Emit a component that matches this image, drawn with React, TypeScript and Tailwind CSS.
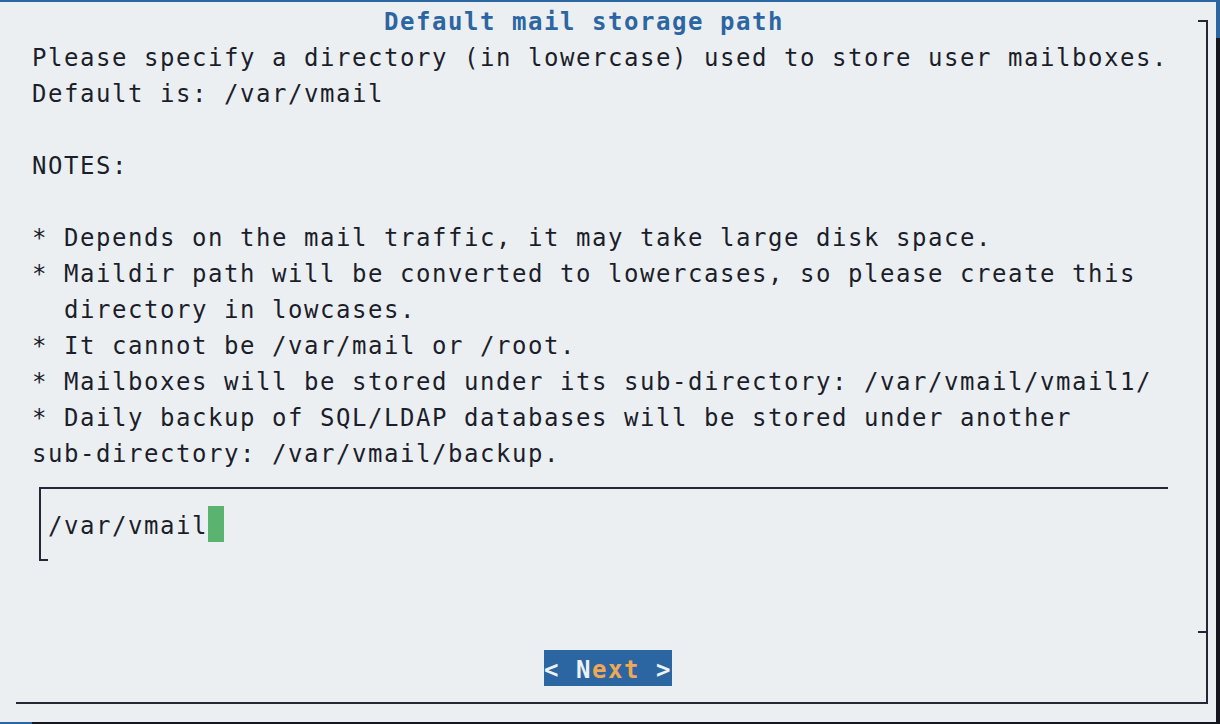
const mono = "font-['DejaVu_Sans_Mono','Liberation_Mono',monospace]";

const lines: string[] = [
  "Please specify a directory (in lowercase) used to store user mailboxes.",
  "Default is: /var/vmail",
  "",
  "NOTES:",
  "",
  "* Depends on the mail traffic, it may take large disk space.",
  "* Maildir path will be converted to lowercases, so please create this",
  "  directory in lowcases.",
  "* It cannot be /var/mail or /root.",
  "* Mailboxes will be stored under its sub-directory: /var/vmail/vmail1/",
  "* Daily backup of SQL/LDAP databases will be stored under another",
  "sub-directory: /var/vmail/backup.",
];

function Row({ children, className = "" }: { children?: React.ReactNode; className?: string }) {
  return <div className={`h-[36px] pt-[2px] whitespace-pre ${className}`}>{children}</div>;
}

function InputBox() {
  return (
    <div className="mt-[17px] ml-[23px] w-[1129px] border-t-2 border-l-2 border-[#262734] flex flex-col">
      <div className="pt-[17px] pl-[7px] flex items-start h-[53px]">
        <span className="h-[36px] pt-[2px]">/var/vmail</span>
        <span className="w-[16px] h-[36px] bg-[#5bb370]" />
      </div>
      <div className="mt-[17px] w-[7px] h-[2px] bg-[#262734]" />
    </div>
  );
}

function NextButton() {
  return (
    <div className="mt-[89px] ml-[528px] w-[128px] h-[36px] pt-[2px] bg-[#2b66a3] font-bold whitespace-pre text-[#eef2f7]">
      {"< "}N<span className="text-[#f0a953]">ext</span>{" >"}
    </div>
  );
}

function Dialog() {
  return (
    <div
      className={`w-[1216px] h-[720px] bg-[#eceff1] pt-[18px] pl-[16px] text-[#1b1e2c] text-[24px] leading-[36px] tracking-[1.55px] ${mono}`}
    >
      <div className="relative flex flex-col w-[1192px] h-[684px] border-r-2 border-b-2 border-[#262734]">
        <span className="absolute top-0 right-0 w-[8px] h-[2px] bg-[#262734]" />
        <span className="absolute top-[611px] right-0 w-[8px] h-[2px] bg-[#262734]" />
        <div className="-mt-[18px] flex flex-col">
          <Row className="pl-[368px] font-bold text-[#2b66a3]">Default mail storage path</Row>
          {lines.map((text, i) => (
            <Row key={i} className="pl-[16px]">
              {text}
            </Row>
          ))}
          <InputBox />
          <NextButton />
        </div>
      </div>
    </div>
  );
}

export default function App() {
  return (
    <div className="w-[1220px] h-[724px] bg-[#2b66a3] flex flex-col overflow-hidden">
      <div className="h-[2px]" />
      <div className="flex h-[720px]">
        <Dialog />
        <div className="w-[4px] flex flex-col">
          <div className="h-[36px]" />
          <div className="flex-1 bg-[#16161f]" />
        </div>
      </div>
      <div className="flex h-[2px]">
        <div className="w-[32px]" />
        <div className="flex-1 bg-[#16161f]" />
      </div>
    </div>
  );
}
